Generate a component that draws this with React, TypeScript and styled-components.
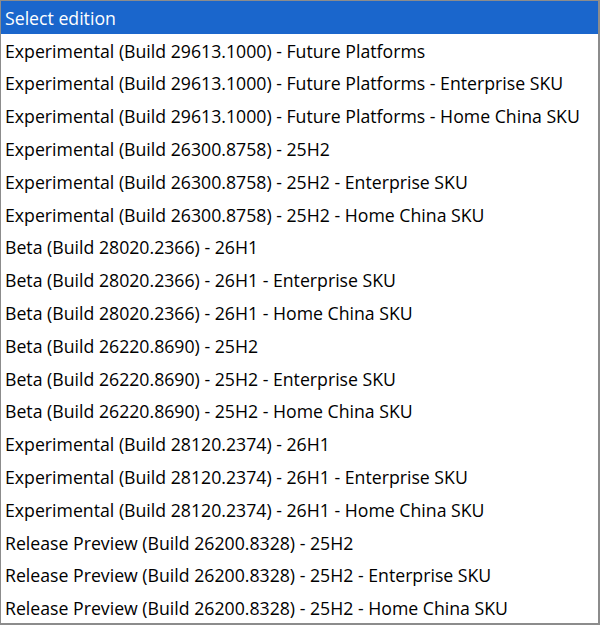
import React from "react";
import styled, { createGlobalStyle } from "styled-components";

const GlobalStyle = createGlobalStyle`
  html, body {
    margin: 0;
    padding: 0;
    background: #ffffff;
  }
`;

const rowHeight = 32.8;

const List = styled.div`
  box-sizing: border-box;
  width: 600px;
  height: 625px;
  border: 1px solid #8c8c8c;
  border-right-width: 2px;
  border-bottom-width: 2px;
  background: #ffffff;
  display: flex;
  flex-direction: column;
  font-family: "Open Sans", "Noto Sans", sans-serif;
  font-size: 17.7px;
  color: #000000;
  overflow: hidden;
`;

const Option = styled.div<{ selected?: boolean }>`
  height: ${rowHeight}px;
  flex-shrink: 0;
  display: flex;
  align-items: center;
  padding-left: 4px;
  padding-top: 1px;
  box-sizing: border-box;
  white-space: nowrap;
  background: ${(props) => (props.selected ? "#1a66cc" : "transparent")};
  color: ${(props) => (props.selected ? "#ffffff" : "#000000")};
`;

const editions = [
  "Experimental (Build 29613.1000) - Future Platforms",
  "Experimental (Build 29613.1000) - Future Platforms - Enterprise SKU",
  "Experimental (Build 29613.1000) - Future Platforms - Home China SKU",
  "Experimental (Build 26300.8758) - 25H2",
  "Experimental (Build 26300.8758) - 25H2 - Enterprise SKU",
  "Experimental (Build 26300.8758) - 25H2 - Home China SKU",
  "Beta (Build 28020.2366) - 26H1",
  "Beta (Build 28020.2366) - 26H1 - Enterprise SKU",
  "Beta (Build 28020.2366) - 26H1 - Home China SKU",
  "Beta (Build 26220.8690) - 25H2",
  "Beta (Build 26220.8690) - 25H2 - Enterprise SKU",
  "Beta (Build 26220.8690) - 25H2 - Home China SKU",
  "Experimental (Build 28120.2374) - 26H1",
  "Experimental (Build 28120.2374) - 26H1 - Enterprise SKU",
  "Experimental (Build 28120.2374) - 26H1 - Home China SKU",
  "Release Preview (Build 26200.8328) - 25H2",
  "Release Preview (Build 26200.8328) - 25H2 - Enterprise SKU",
  "Release Preview (Build 26200.8328) - 25H2 - Home China SKU",
];

export default function App(): JSX.Element {
  return (
    <>
      <GlobalStyle />
      <List>
        <Option selected>Select edition</Option>
        {editions.map((name) => (
          <Option key={name}>{name}</Option>
        ))}
      </List>
    </>
  );
}
